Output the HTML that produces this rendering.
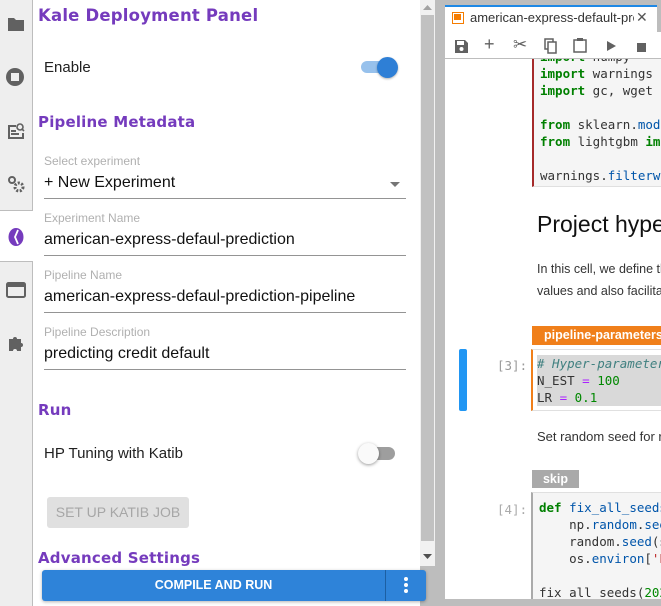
<!DOCTYPE html>
<html><head><style>
*{box-sizing:border-box;margin:0;padding:0}
body{width:661px;height:606px;overflow:hidden;background:#bdbdbd;font-family:"Liberation Sans",sans-serif;position:relative}
.abs{position:absolute}
#side{left:0;top:0;width:33px;height:606px;background:#eeeeee;border-right:1px solid #bdbdbd}
#panel{left:33px;top:0;width:387px;height:606px;background:#fff}
h2{position:absolute;color:#753bbd;font-weight:bold;font-family:"DejaVu Sans","Liberation Sans",sans-serif;letter-spacing:0.2px}
.lbl{position:absolute;color:#212121;font-size:15px}
.fl{position:absolute;left:11px;width:362px;border-bottom:1px solid #949494}
.fl .s{font-size:12px;color:#b0b0b0;display:block;height:18px;line-height:16px}
.fl .v{font-size:16px;color:#111;display:block;height:26px;line-height:24px}
.mono{font-family:"DejaVu Sans Mono","Liberation Mono",monospace;font-size:12.5px;line-height:17px;white-space:pre}
.k{color:#008000;font-weight:bold}.b{color:#0055aa}.n{color:#080}.p{color:#aa22ff}
</style></head><body>
<div id="side" class="abs">
 <svg class="abs" style="left:7px;top:16px" width="18" height="16" viewBox="0 0 18 16"><path d="M1 2h6l2 2h8v11H1z" fill="#616161"/></svg>
 <svg class="abs" style="left:5px;top:67px" width="20" height="20" viewBox="0 0 20 20"><circle cx="10" cy="10" r="9" fill="#616161"/><rect x="6" y="6" width="8" height="8" fill="#eee"/></svg>
 <svg class="abs" style="left:7px;top:122px" width="18" height="18" viewBox="0 0 18 18"><path d="M1 3h8v2H3v10h12v-4h2v6H1z M4 8h5v2H4zM4 11h8v2H4z" fill="#616161"/><circle cx="13" cy="5" r="3" fill="none" stroke="#616161" stroke-width="1.6"/><path d="M15 7l2 2" stroke="#616161" stroke-width="1.6"/></svg>
 <svg class="abs" style="left:7px;top:175px" width="18" height="18" viewBox="0 0 18 18"><circle cx="5" cy="5" r="3" fill="none" stroke="#616161" stroke-width="2"/><circle cx="12" cy="12" r="4" fill="none" stroke="#616161" stroke-width="3" stroke-dasharray="2 1.5"/></svg>
 <div class="abs" style="left:0;top:210px;width:33px;height:52px;background:#fff;border-top:1px solid #bdbdbd;border-bottom:1px solid #bdbdbd"></div>
 <svg class="abs" style="left:8px;top:227px" width="16" height="20" viewBox="0 0 16 20"><ellipse cx="8" cy="10" rx="7.5" ry="9" fill="#753bbd"/><path d="M10 3L7 10l3 7" stroke="#fff" stroke-width="1.8" fill="none"/></svg>
 <svg class="abs" style="left:6px;top:282px" width="20" height="16" viewBox="0 0 20 16"><rect x="1" y="1" width="18" height="14" rx="1.5" fill="none" stroke="#616161" stroke-width="2"/><rect x="1" y="1" width="18" height="4" fill="#616161"/></svg>
 <svg class="abs" style="left:7px;top:334px" width="18" height="18" viewBox="0 0 18 18"><path d="M2 5h4a2 2 0 1 1 4 0h4v4a2 2 0 1 1 0 4v4h-4a2 2 0 1 0-4 0H2z" fill="#616161"/></svg>
</div>
<div id="panel" class="abs">
 <h2 style="left:5px;top:6px;font-size:16.5px">Kale Deployment Panel</h2>
 <div class="lbl" style="left:11px;top:59px">Enable</div>
 <div class="abs" style="left:328px;top:61px;width:32px;height:12px;border-radius:6px;background:#97c1ec"></div>
 <div class="abs" style="left:344px;top:57px;width:21px;height:21px;border-radius:50%;background:#2e7fd6;box-shadow:0 1px 2px rgba(0,0,0,.3)"></div>
 <h2 style="left:5px;top:113px;font-size:15px">Pipeline Metadata</h2>
 <div class="fl" style="top:153px;height:46px"><span class="s">Select experiment</span><span class="v">+ New Experiment</span></div>
 <svg class="abs" style="left:357px;top:182px" width="10" height="6"><path d="M0 0h10L5 5z" fill="#757575"/></svg>
 <div class="fl" style="top:210px;height:46px"><span class="s">Experiment Name</span><span class="v">american-express-defaul-prediction</span></div>
 <div class="fl" style="top:267px;height:46px"><span class="s">Pipeline Name</span><span class="v">american-express-defaul-prediction-pipeline</span></div>
 <div class="fl" style="top:324px;height:46px"><span class="s">Pipeline Description</span><span class="v">predicting credit default</span></div>
 <h2 style="left:5px;top:401px;font-size:15px">Run</h2>
 <div class="lbl" style="left:11px;top:445px">HP Tuning with Katib</div>
 <div class="abs" style="left:327px;top:447px;width:35px;height:13px;border-radius:7px;background:#9e9e9e"></div>
 <div class="abs" style="left:325px;top:443px;width:21px;height:21px;border-radius:50%;background:#fafafa;box-shadow:0 1px 3px rgba(0,0,0,.4)"></div>
 <div class="abs" style="left:14px;top:497px;width:142px;height:31px;background:#e0e0e0;border-radius:3px;color:#a6a6a6;font-size:14px;text-align:center;line-height:31px">SET UP KATIB JOB</div>
 <h2 style="left:5px;top:549px;font-size:15px;height:17px;overflow:hidden">Advanced Settings</h2>
 <div class="abs" style="left:387px;top:0;width:15px;height:566px;background:#f1f1f1"></div>
 <div class="abs" style="left:388px;top:15px;width:13px;height:526px;background:#c1c1c1"></div>
 <svg class="abs" style="left:390px;top:5px" width="9" height="5"><path d="M0 5h9L4.5 0z" fill="#a3a3a3"/></svg>
 <svg class="abs" style="left:390px;top:554px" width="9" height="5"><path d="M0 0h9L4.5 5z" fill="#505050"/></svg>
 <div class="abs" style="left:9px;top:570px;width:384px;height:31px;background:#2e83d9;border-radius:3px;box-shadow:0 1px 3px rgba(0,0,0,.3);color:#fff;font-size:12.5px;font-weight:bold;line-height:31px">
  <div class="abs" style="left:0;width:343px;text-align:center">COMPILE AND RUN</div>
  <div class="abs" style="left:343px;top:0;width:1px;height:31px;background:#1c5fa3"></div>
  <div class="abs" style="left:362px;top:7px;width:4px;height:4px;border-radius:50%;background:#fff;box-shadow:0 6px 0 #fff,0 12px 0 #fff"></div>
 </div>
 <div class="abs" style="left:402px;top:0;width:10px;height:606px;background:#bdbdbd"></div>
</div>
<div class="abs" style="left:445px;top:5px;width:216px;height:594px;background:#fff;overflow:hidden">
 <div class="abs mono" style="left:87px;top:38px;width:140px;height:144px;background:#f5f5f5;border:1px solid #e0e0e0;border-left:2px solid #a52a2a;padding:4px 0 0 6px;color:#333"><span class="k">import</span> numpy
<span class="k">import</span> warnings
<span class="k">import</span> gc, wget

<span class="k">from</span> sklearn.<span class="b">model_selection</span>
<span class="k">from</span> lightgbm <span class="k">import</span>

warnings.<span class="b">filterwarnings</span></div>
 <div class="abs" style="left:0;top:0;width:216px;height:27px;background:#fff;border-top:2px solid #1e88e5"></div>
 <div class="abs" style="left:212px;top:0;width:4px;height:27px;background:#bdbdbd"></div>
 <div class="abs" style="left:7px;top:7px;width:12px;height:12px;border:1.5px solid #f57c00;"><div style="margin:1px;width:7px;height:6px;background:#f57c00"></div></div>
 <div class="abs" style="left:25px;top:5px;font-size:13px;color:#333;white-space:nowrap;width:164px;overflow:hidden">american-express-default-prediction</div>
 <div class="abs" style="left:191px;top:4px;font-size:14px;color:#555">✕</div>
 <div class="abs" style="left:0;top:27px;width:216px;height:27px;border-bottom:1px solid #bdbdbd;background:#fff"></div>
 <svg class="abs" style="left:10px;top:35px" width="13" height="13"><path d="M0 0h10l3 3v10H0z" fill="#616161"/><rect x="2" y="1" width="7" height="4" fill="#fff"/><circle cx="6.5" cy="9" r="2" fill="#fff"/></svg>
 <div class="abs" style="left:39px;top:29px;font-size:18px;color:#616161">+</div>
 <div class="abs" style="left:68px;top:30px;font-size:17px;color:#616161">✂</div>
 <svg class="abs" style="left:99px;top:33px" width="14" height="16"><rect x="1" y="1" width="8" height="10" fill="none" stroke="#616161" stroke-width="1.5"/><rect x="4" y="4" width="8" height="11" fill="#fff" stroke="#616161" stroke-width="1.5"/></svg>
 <svg class="abs" style="left:128px;top:33px" width="14" height="15"><rect x="1" y="2" width="12" height="12" fill="none" stroke="#616161" stroke-width="1.5"/><rect x="4" y="0" width="6" height="3" fill="#616161"/></svg>
 <svg class="abs" style="left:162px;top:36px" width="9" height="10"><path d="M0 0l9 5-9 5z" fill="#616161"/></svg>
 <div class="abs" style="left:192px;top:38px;width:9px;height:9px;background:#616161"></div>
 <div class="abs" style="left:92px;top:206px;font-size:23px;color:#111;white-space:nowrap">Project hyperparameters</div>
 <div class="abs" style="left:92px;top:253px;font-size:12.5px;color:#333;line-height:22px;white-space:nowrap">In this cell, we define the<br>values and also facilitate</div>
 <div class="abs" style="left:87px;top:321px;width:140px;height:19px;background:#f07f1a;color:#fff;font-weight:bold;font-size:12.5px;line-height:19px;padding-left:12px;white-space:nowrap">pipeline-parameters</div>
 <div class="abs" style="left:14px;top:344px;width:8px;height:62px;background:#2196f3;border-radius:2px"></div>
 <div class="abs mono" style="left:52px;top:352px;color:#999">[3]:</div>
 <div class="abs" style="left:86px;top:344px;width:140px;height:62px;border:1px solid #e0e0e0;border-left:2px solid #f07f1a;background:#fff"></div>
 <div class="abs mono" style="left:92px;top:350px;width:130px;height:51px;background:#d9d9d9;color:#333"><i style="color:#408080"># Hyper-parameters</i>
N_EST <span class="p">=</span> <span class="n">100</span>
LR <span class="p">=</span> <span class="n">0.1</span></div>
 <div class="abs" style="left:92px;top:424px;font-size:13px;color:#333;white-space:nowrap">Set random seed for reproducibility</div>
 <div class="abs" style="left:87px;top:465px;width:47px;height:18px;background:#a9a9a9;color:#fff;font-weight:bold;font-size:12.5px;line-height:18px;text-align:center">skip</div>
 <div class="abs mono" style="left:52px;top:496px;color:#aaa">[4]:</div>
 <div class="abs mono" style="left:86px;top:487px;width:140px;height:120px;background:#f5f5f5;border:1px solid #e0e0e0;border-left:2px solid #aaa;padding:6px 0 0 6px;color:#333"><span class="k">def</span> <span class="b">fix_all_seeds</span>(seed):
    np.<span class="b">random</span>.<span class="b">seed</span>(seed)
    random.<span class="b">seed</span>(seed)
    os.<span class="b">environ</span>[<span style="color:#ba2121">'PYTHONHASH</span>

fix_all_seeds(<span class="n">2021</span>)</div>
</div>
</body></html>
